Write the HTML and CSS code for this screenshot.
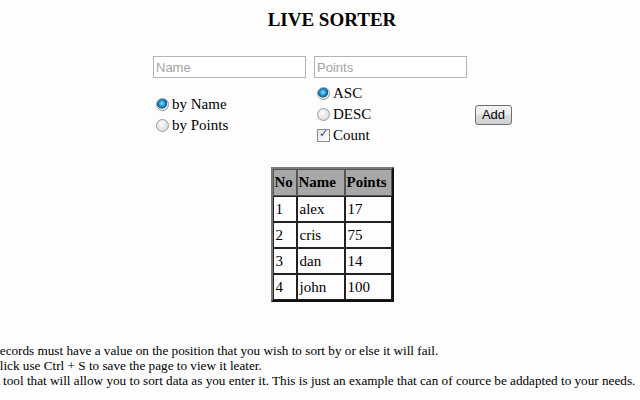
FILE: index.html
```html
<!DOCTYPE html>
<html lang="en">
<head>
    <meta charset="UTF-8">
    <title>Live Sorter</title>
    <link rel="stylesheet" href="styles.css">
</head>
<body>
    <div class="page">
        <h1>LIVE SORTER</h1>
    </div>
    <form class="controls">
        <input type="text" class="field" placeholder="Name">
        <input type="text" class="field" placeholder="Points">
        <span></span>
        <div class="group">
            <label><input type="radio" name="by" checked> by Name</label>
            <label><input type="radio" name="by"> by Points</label>
        </div>
        <div class="group">
            <label><input type="radio" name="dir" checked> ASC</label>
            <label><input type="radio" name="dir"> DESC</label>
            <label><input type="checkbox" checked> Count</label>
        </div>
        <div class="add-cell">
            <button type="button" class="add-btn">Add</button>
        </div>
    </form>
    <div class="page">
        <table class="records">
            <tr><th class="col-no">No</th><th class="col-name">Name</th><th class="col-points">Points</th></tr>
            <tr><td>1</td><td>alex</td><td>17</td></tr>
            <tr><td>2</td><td>cris</td><td>75</td></tr>
            <tr><td>3</td><td>dan</td><td>14</td></tr>
            <tr><td>4</td><td>john</td><td>100</td></tr>
        </table>
    </div>
    <div class="notes">
        <p>Records must have a value on the position that you wish to sort by or else it will fail.</p>
        <p>Click use Ctrl + S to save the page to view it leater.</p>
        <p>A tool that will allow you to sort data as you enter it. This is just an example that can of cource be addapted to your needs.</p>
    </div>
</body>
</html>
```

FILE: styles.css
```css
body {
    margin: 0;
    padding: 0;
    background-color: #fdfdfd;
    font-family: "Liberation Serif", "Times New Roman", serif;
    color: #000;
    overflow: hidden;
}
.page {
    padding-left: 24px;
    width: 616px;
    text-align: center;
}
h1 {
    margin: 9px 0 0;
    font-size: 19px;
    line-height: 22px;
}
.controls {
    margin: 25px 0 0 153px;
    display: grid;
    grid-template-columns: 161px 161px 161px;
    align-items: center;
}
.field {
    width: 153px;
    height: 22px;
    box-sizing: border-box;
    margin: 0;
    padding: 1px 2px;
    border: 1px solid #b3b3b3;
    border-radius: 0;
    background: #fff;
    font-family: "Liberation Sans", Arial, sans-serif;
    font-size: 13px;
}
.field::placeholder {
    color: #a3a3a3;
}
.group {
    display: flex;
    flex-direction: column;
    margin-top: 5px;
}
.group label {
    display: flex;
    align-items: center;
    height: 21px;
    font-size: 15px;
}
input[type="radio"], input[type="checkbox"] {
    appearance: none;
    -webkit-appearance: none;
    width: 13px;
    height: 13px;
    margin: 0 3px 0 3px;
    box-sizing: border-box;
    flex: none;
    position: relative;
}
input[type="radio"] {
    border-radius: 50%;
    border: 1px solid #9a9a9a;
    background: radial-gradient(circle at 40% 35%, #fdfdfd 0, #e4e4e4 55%, #cfcfcf 100%);
}
input[type="radio"]:checked {
    background: radial-gradient(circle at 45% 40%, #8fe0ff 0, #1e8ec9 35%, #0a5d92 55%, #e8e8e8 60%, #d6d6d6 100%);
}
input[type="checkbox"] {
    border: 1px solid #8c8c8c;
    background: linear-gradient(135deg, #e6e6e6, #fff);
}
input[type="checkbox"]:checked::before {
    content: "\2713";
    position: absolute;
    left: 1px;
    top: -3px;
    font-family: "DejaVu Sans", sans-serif;
    font-size: 11px;
    font-weight: bold;
    color: #2b3f96;
}
.add-cell {
    margin-top: 5px;
}
.add-btn {
    width: 37px;
    height: 20px;
    padding: 0;
    border: 1px solid #707070;
    border-radius: 3px;
    background: linear-gradient(#f3f3f3 0, #ebebeb 50%, #dddddd 51%, #cfcfcf 100%);
    font-family: "Liberation Sans", Arial, sans-serif;
    font-size: 13px;
    color: #000;
}
.records {
    margin: 21px auto 0;
    width: 123px;
    table-layout: fixed;
    border-collapse: separate;
    border-spacing: 0;
    border: 2px solid #111;
    border-left-color: #7a7a7a;
    border-top-color: #7a7a7a;
    text-align: left;
    font-size: 15px;
    line-height: 17px;
}
.records th, .records td {
    border: 1px solid #222;
    padding: 4px 2px 3px;
    white-space: nowrap;
    overflow: hidden;
}
.records th {
    background-color: #a8a8a8;
    border-color: #555;
    padding: 4px 1px;
}
.records .col-no {
    width: 20px;
}
.records .col-name {
    width: 44px;
}
.records .col-points {
    width: 43px;
}
.notes {
    margin: 41px 0 0 -9px;
    font-size: 13.2px;
    line-height: 15px;
    white-space: nowrap;
}
.notes p {
    margin: 0;
}
```
